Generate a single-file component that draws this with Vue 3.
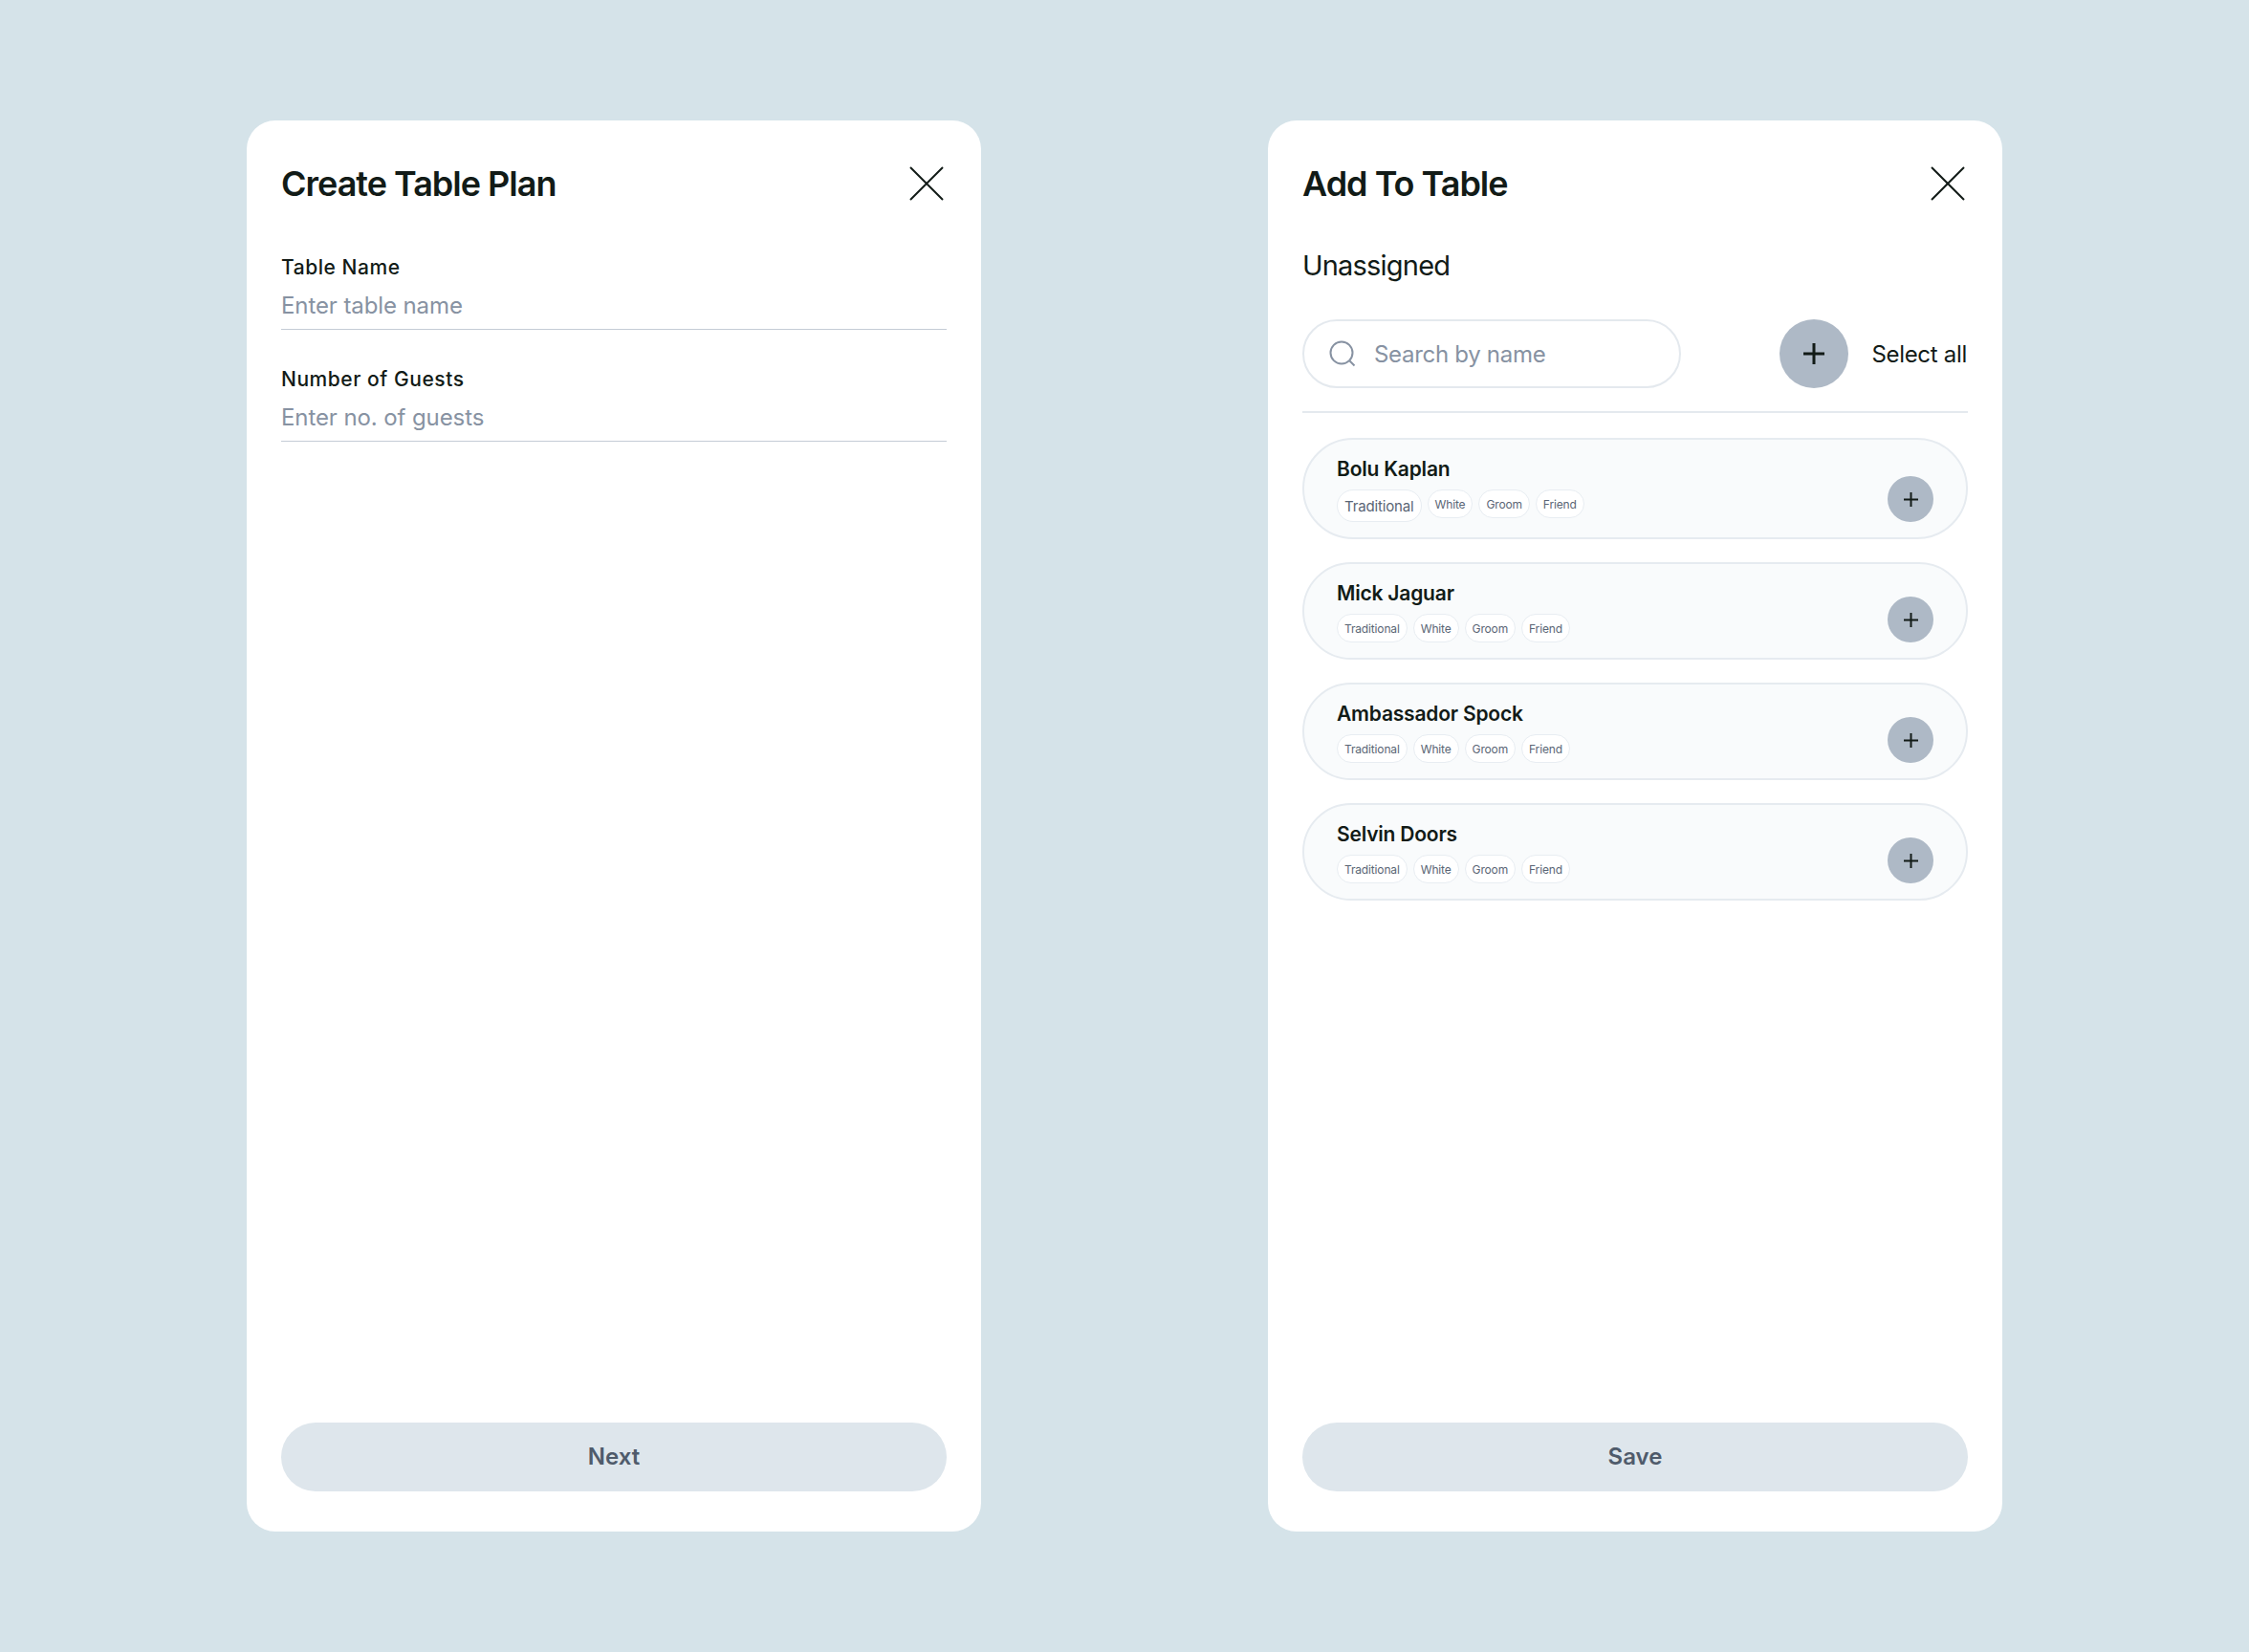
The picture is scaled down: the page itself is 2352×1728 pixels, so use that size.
<template>
  <div class="page">
    <section class="card">
      <header class="card-header">
        <h2 class="title">Create Table Plan</h2>
        <button class="close" aria-label="Close">
          <svg width="36" height="36" viewBox="0 0 36 36"><path d="M1 1L35 35M35 1L1 35" /></svg>
        </button>
      </header>
      <div class="form">
        <label class="field">
          <span class="field-label">Table Name</span>
          <input class="field-input" placeholder="Enter table name" />
        </label>
        <label class="field">
          <span class="field-label">Number of Guests</span>
          <input class="field-input" placeholder="Enter no. of guests" />
        </label>
      </div>
      <button class="primary">Next</button>
    </section>

    <section class="card">
      <header class="card-header">
        <h2 class="title">Add To Table</h2>
        <button class="close" aria-label="Close">
          <svg width="36" height="36" viewBox="0 0 36 36"><path d="M1 1L35 35M35 1L1 35" /></svg>
        </button>
      </header>
      <div class="body">
        <h3 class="subtitle">Unassigned</h3>
        <div class="toolbar">
          <div class="search">
            <svg width="28" height="28" viewBox="0 0 28 28">
              <circle cx="13" cy="13" r="11.5" />
              <path d="M21.5 21.5L26.5 26.5" />
            </svg>
            <input class="search-input" placeholder="Search by name" />
          </div>
          <div class="select-all">
            <button class="add add-large" aria-label="Add all">
              <svg width="22" height="22" viewBox="0 0 22 22"><path d="M11 0V22M0 11H22" /></svg>
            </button>
            <span>Select all</span>
          </div>
        </div>
        <ul class="guests">
          <li v-for="guest in guests" :key="guest.name" class="guest">
            <div class="guest-info">
              <div class="guest-name">{{ guest.name }}</div>
              <div class="tags">
                <span
                  v-for="(tag, i) in tags"
                  :key="tag"
                  class="tag"
                  :class="{ 'tag-big': guest.bigFirst && i === 0 }"
                >{{ tag }}</span>
              </div>
            </div>
            <button class="add add-small" aria-label="Add guest">
              <svg width="15" height="15" viewBox="0 0 15 15"><path d="M7.5 0V15M0 7.5H15" /></svg>
            </button>
          </li>
        </ul>
      </div>
      <button class="primary">Save</button>
    </section>
  </div>
</template>

<script setup>
const tags = ['Traditional', 'White', 'Groom', 'Friend']

const guests = [
  { name: 'Bolu Kaplan', bigFirst: true },
  { name: 'Mick Jaguar' },
  { name: 'Ambassador Spock' },
  { name: 'Selvin Doors' }
]
</script>

<style>
body {
  background: #d5e3e9;
}
</style>

<style scoped>
.page {
  box-sizing: border-box;
  height: 1728px;
  padding-top: 126px;
  display: flex;
  justify-content: center;
  gap: 300px;
  background: #d5e3e9;
  font-family: Inter, "Liberation Sans", sans-serif;
  color: #121b17;
}

.card {
  box-sizing: border-box;
  width: 768px;
  height: 1476px;
  padding: 48px 36px 42px;
  display: flex;
  flex-direction: column;
  background: #ffffff;
  border-radius: 30px;
}

.card-header {
  display: flex;
  justify-content: space-between;
  align-items: center;
  height: 36px;
}

.title {
  margin: 0;
  font-size: 36px;
  font-weight: 600;
  letter-spacing: -1px;
}

button {
  padding: 0;
  border: none;
  font-family: inherit;
}

.close {
  width: 36px;
  height: 36px;
  margin-right: 3px;
  background: none;
}

.close svg {
  display: block;
}

.close path {
  stroke: #121b17;
  stroke-width: 2;
  fill: none;
}

.form {
  flex: 1;
  margin-top: 54px;
  display: flex;
  flex-direction: column;
  gap: 36px;
}

.field {
  display: flex;
  flex-direction: column;
}

.field-label {
  padding-top: 1px;
  font-size: 21px;
  line-height: 29px;
  font-weight: 500;
  letter-spacing: 0.55px;
}

.field-input {
  box-sizing: border-box;
  height: 51px;
  width: 100%;
  padding: 0;
  border: none;
  border-bottom: 1px solid #c5ccd6;
  outline: none;
  font-family: inherit;
  font-size: 24px;
  letter-spacing: -0.1px;
}

.field-input::placeholder,
.search-input::placeholder {
  color: #8792a2;
  opacity: 1;
}

.primary {
  width: 100%;
  height: 72px;
  flex-shrink: 0;
  padding-bottom: 2px;
  border-radius: 36px;
  background: #dee6ec;
  color: #4f5b6b;
  font-size: 24px;
  font-weight: 600;
}

.body {
  flex: 1;
  margin-top: 48px;
}

.subtitle {
  margin: 0;
  font-size: 29px;
  line-height: 40px;
  font-weight: 400;
  letter-spacing: -0.8px;
}

.toolbar {
  margin-top: 36px;
  padding-bottom: 24px;
  border-bottom: 2px solid #e4e9ee;
  display: flex;
  justify-content: space-between;
  align-items: center;
}

.search {
  box-sizing: border-box;
  width: 396px;
  height: 72px;
  padding: 0 26px;
  display: flex;
  align-items: center;
  gap: 19px;
  border: 2px solid #e4e9ee;
  border-radius: 36px;
}

.search svg {
  flex-shrink: 0;
  fill: none;
  stroke: #8792a2;
  stroke-width: 2;
}

.search-input {
  flex: 1;
  min-width: 0;
  padding: 0;
  border: none;
  outline: none;
  font-family: inherit;
  font-size: 24px;
  letter-spacing: -0.3px;
}

.select-all {
  display: flex;
  align-items: center;
  gap: 24px;
  margin-right: 1px;
  font-size: 24px;
  letter-spacing: -0.3px;
}

.add {
  display: flex;
  align-items: center;
  justify-content: center;
  flex-shrink: 0;
  border-radius: 50%;
  background: #aeb9c6;
}

.add path {
  stroke: #121b17;
  fill: none;
}

.add-large {
  width: 72px;
  height: 72px;
}

.add-large path {
  stroke-width: 3;
}

.add-small {
  width: 48px;
  height: 48px;
  align-self: flex-end;
}

.add-small path {
  stroke-width: 2;
}

.guests {
  margin: 26px 0 0;
  padding: 0;
  list-style: none;
  display: flex;
  flex-direction: column;
  gap: 24px;
}

.guest {
  box-sizing: border-box;
  padding: 16px 34px;
  display: flex;
  justify-content: space-between;
  background: #f9fbfc;
  border: 2px solid #e6ebf0;
  border-radius: 60px;
}

.guest-name {
  font-size: 21px;
  line-height: 30px;
  font-weight: 600;
  letter-spacing: -0.2px;
}

.tags {
  margin-top: 6px;
  display: flex;
  align-items: flex-start;
  gap: 6px;
}

.tag {
  box-sizing: border-box;
  height: 30px;
  padding: 0 7px;
  display: flex;
  align-items: center;
  background: #ffffff;
  border: 1px solid #e8edf2;
  border-radius: 15px;
  color: #5a6575;
  font-size: 12px;
  letter-spacing: -0.15px;
}

.tag-big {
  height: 34px;
  border-radius: 17px;
  font-size: 15px;
}
</style>
